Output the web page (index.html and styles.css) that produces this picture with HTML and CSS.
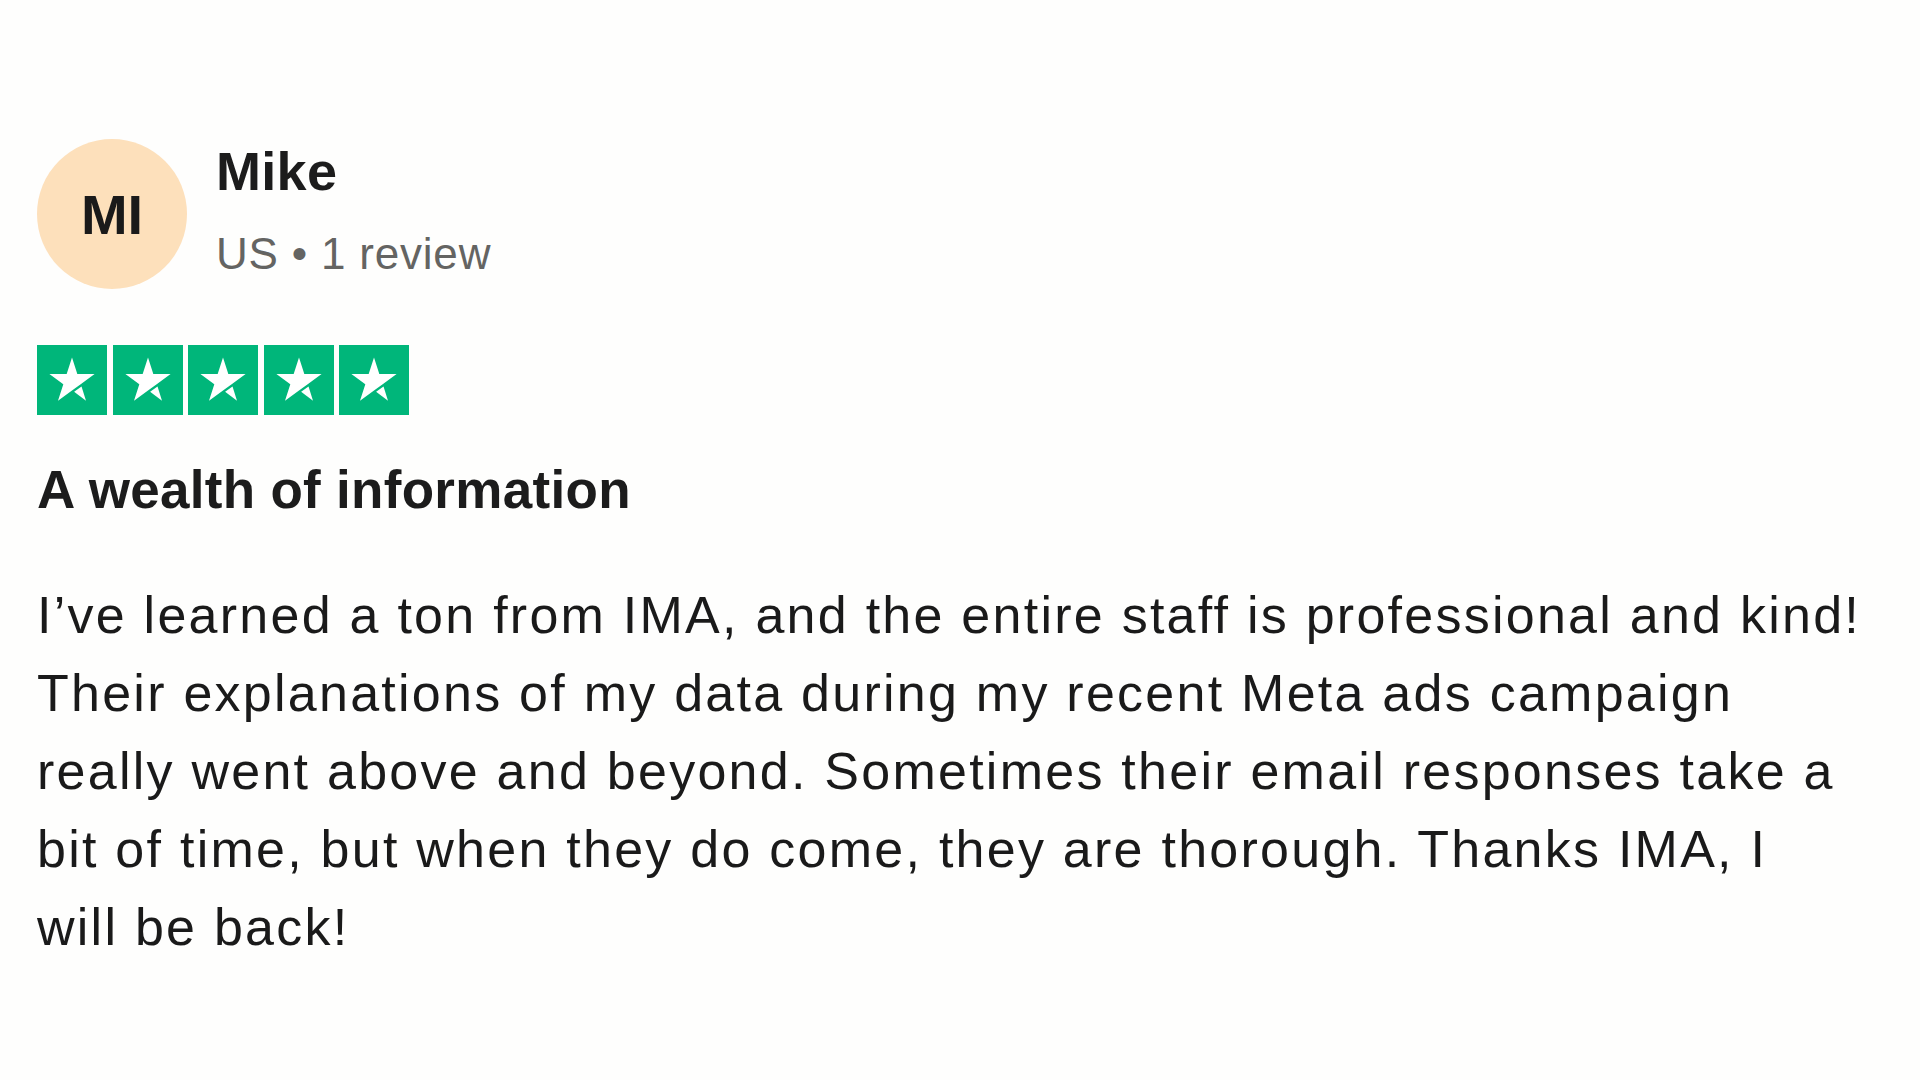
FILE: index.html
```html
<!DOCTYPE html>
<html lang="en">
<head>
<meta charset="utf-8">
<title>Review – A wealth of information</title>
<link rel="stylesheet" href="styles.css">
</head>
<body>
<article class="review">
  <header class="reviewer">
    <div class="avatar">MI</div>
    <div class="reviewer-meta">
      <div class="reviewer-name">Mike</div>
      <div class="reviewer-sub">US • 1 review</div>
    </div>
  </header>

  <div class="stars" aria-label="Rated 5 out of 5">
    <svg class="star" viewBox="0 0 100 100"><rect width="100" height="100" fill="#00b67a"/><polygon fill="#fff" points="50,18 57.6,41.5 82.3,41.5 62.4,56 50,65 30,79.5 37.6,56 17.7,41.5 42.4,41.5"/><polygon fill="#fff" points="53,66.8 63.6,59.2 70,79.5"/></svg>
    <svg class="star" viewBox="0 0 100 100"><rect width="100" height="100" fill="#00b67a"/><polygon fill="#fff" points="50,18 57.6,41.5 82.3,41.5 62.4,56 50,65 30,79.5 37.6,56 17.7,41.5 42.4,41.5"/><polygon fill="#fff" points="53,66.8 63.6,59.2 70,79.5"/></svg>
    <svg class="star" viewBox="0 0 100 100"><rect width="100" height="100" fill="#00b67a"/><polygon fill="#fff" points="50,18 57.6,41.5 82.3,41.5 62.4,56 50,65 30,79.5 37.6,56 17.7,41.5 42.4,41.5"/><polygon fill="#fff" points="53,66.8 63.6,59.2 70,79.5"/></svg>
    <svg class="star" viewBox="0 0 100 100"><rect width="100" height="100" fill="#00b67a"/><polygon fill="#fff" points="50,18 57.6,41.5 82.3,41.5 62.4,56 50,65 30,79.5 37.6,56 17.7,41.5 42.4,41.5"/><polygon fill="#fff" points="53,66.8 63.6,59.2 70,79.5"/></svg>
    <svg class="star" viewBox="0 0 100 100"><rect width="100" height="100" fill="#00b67a"/><polygon fill="#fff" points="50,18 57.6,41.5 82.3,41.5 62.4,56 50,65 30,79.5 37.6,56 17.7,41.5 42.4,41.5"/><polygon fill="#fff" points="53,66.8 63.6,59.2 70,79.5"/></svg>
  </div>

  <h2 class="review-title">A wealth of information</h2>

  <p class="review-body">I’ve learned a ton from IMA, and the entire staff is professional and kind!<br>
Their explanations of my data during my recent Meta ads campaign<br>
really went above and beyond. Sometimes their email responses take a<br>
bit of time, but when they do come, they are thorough. Thanks IMA, I<br>
will be back!</p>
</article>
</body>
</html>
```

FILE: styles.css
```css
html, body {
  margin: 0;
  padding: 0;
}

body {
  background: #fefefd;
  color: #1c1c1c;
  font-family: "Liberation Sans", Arial, sans-serif;
  width: 1920px;
  height: 1080px;
  overflow: hidden;
}

.review {
  padding: 139px 20px 0 37px;
}

.reviewer {
  display: flex;
  align-items: flex-start;
  gap: 29px;
}

.avatar {
  width: 150px;
  height: 150px;
  border-radius: 50%;
  background: #fde0bb;
  display: flex;
  align-items: center;
  justify-content: center;
  font-weight: 700;
  font-size: 56px;
  color: #1a1a1a;
  flex: none;
}

.reviewer-meta {
  padding-top: 2px;
  display: flex;
  flex-direction: column;
}

.reviewer-name {
  font-weight: 700;
  font-size: 54px;
  line-height: 60px;
  letter-spacing: 0.3px;
  color: #1c1c1c;
}

.reviewer-sub {
  margin-top: 23px;
  font-size: 44px;
  line-height: 60px;
  letter-spacing: 0.8px;
  color: #646462;
}

.stars {
  margin-top: 56px;
  display: flex;
  gap: 5.5px;
}

.star {
  width: 70px;
  height: 70px;
  display: block;
}

.review-title {
  margin: 43px 0 0 0;
  font-weight: 700;
  font-size: 53px;
  line-height: 64px;
  letter-spacing: 0.3px;
  color: #1c1c1c;
}

.review-body {
  margin: 54px 0 0 0;
  font-size: 52px;
  line-height: 78px;
  letter-spacing: 2.25px;
  color: #1a1a1a;
}
```
